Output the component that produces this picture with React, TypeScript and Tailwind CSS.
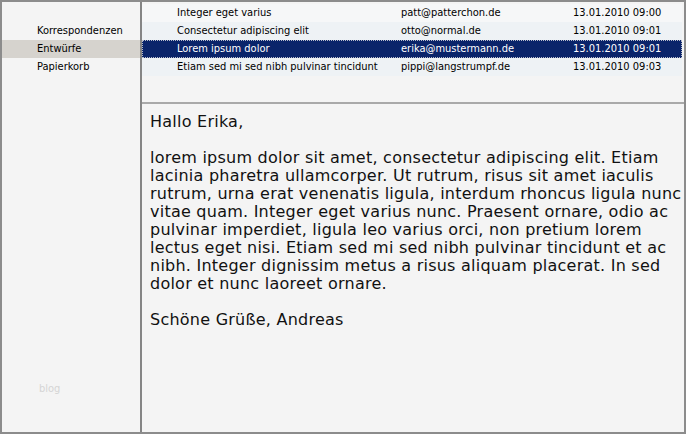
import React from "react";

const FOLDERS = [
  { label: "Korrespondenzen", active: false },
  { label: "Entwürfe", active: true },
  { label: "Papierkorb", active: false },
];

const MAILS = [
  { subject: "Integer eget varius", from: "patt@patterchon.de", date: "13.01.2010 09:00" },
  { subject: "Consectetur adipiscing elit", from: "otto@normal.de", date: "13.01.2010 09:01" },
  { subject: "Lorem ipsum dolor", from: "erika@mustermann.de", date: "13.01.2010 09:01", selected: true },
  { subject: "Etiam sed mi sed nibh pulvinar tincidunt", from: "pippi@langstrumpf.de", date: "13.01.2010 09:03" },
];

const BODY = [
  "lorem ipsum dolor sit amet, consectetur adipiscing elit. Etiam",
  "lacinia pharetra ullamcorper. Ut rutrum, risus sit amet iaculis",
  "rutrum, urna erat venenatis ligula, interdum rhoncus ligula nunc",
  "vitae quam. Integer eget varius nunc. Praesent ornare, odio ac",
  "pulvinar imperdiet, ligula leo varius orci, non pretium lorem",
  "lectus eget nisi. Etiam sed mi sed nibh pulvinar tincidunt et ac",
  "nibh. Integer dignissim metus a risus aliquam placerat. In sed",
  "dolor et nunc laoreet ornare.",
];

export default function App() {
  return (
    <div className="w-[686px] h-[434px] flex border-2 border-[#8c8c8c] bg-[#f4f4f4] text-[11px] text-black font-['DejaVu_Sans_Condensed','DejaVu_Sans',sans-serif]">
      {/* folders */}
      <aside className="w-[140px] shrink-0 flex flex-col pt-[20px] border-r-2 border-[#858585]">
        {FOLDERS.map((f) => (
          <div
            key={f.label}
            className={`h-[18px] flex items-center pl-[35px] ${f.active ? "bg-[#d6d3ce]" : ""}`}
          >
            {f.label}
          </div>
        ))}
        <div className="mt-auto mb-[34px] pl-[37px] leading-[18px] text-[#d4d4d4]">blog</div>
      </aside>

      <main className="flex-1 flex flex-col min-w-0">
        {/* message list */}
        <div className="h-[102px] shrink-0 pt-[2px] border-b-2 border-[#a9a9a9]">
          {MAILS.map((m, i) => (
            <div
              key={m.subject}
              className={`mr-[2px] h-[18px] grid grid-cols-[224px_172px_1fr] items-center whitespace-nowrap ${
                m.selected
                  ? "bg-[#0a246a] text-white border border-dotted border-[#b8bccb] pl-[34px]"
                  : i % 2 === 1
                  ? "bg-[#eef2f5] pl-[35px]"
                  : "bg-[#f6f7f8] pl-[35px]"
              }`}
            >
              <span>{m.subject}</span>
              <span>{m.from}</span>
              <span>{m.date}</span>
            </div>
          ))}
        </div>

        {/* message body */}
        <div className="flex-1 overflow-hidden pl-[8px] pt-[9px] text-[16px] leading-[18px] tracking-[0.24px] whitespace-nowrap text-[#111] font-['DejaVu_Sans',sans-serif]">
          <p>Hallo Erika,</p>
          <p className="mt-[18px]">
            {BODY.map((line) => (
              <span key={line} className="block">
                {line}
              </span>
            ))}
          </p>
          <p className="mt-[18px]">Schöne Grüße, Andreas</p>
        </div>
      </main>
    </div>
  );
}
